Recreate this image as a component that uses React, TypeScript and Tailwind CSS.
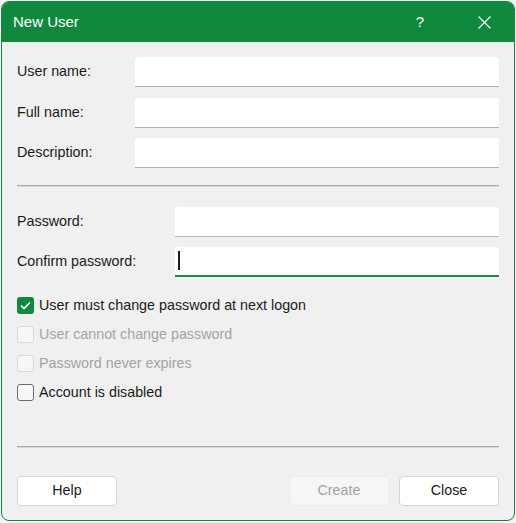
import type { ReactNode } from "react";

const FONT = { fontFamily: '"Liberation Sans", Arial, sans-serif' };

function Field({ label, labelWidth, focused, className }: { label: string; labelWidth: string; focused?: boolean; className?: string }) {
  return (
    <div className={`flex items-center ${className ?? ""}`}>
      <label className={`${labelWidth} shrink-0 text-[14.3px] text-[#1a1a1a]`}>{label}</label>
      <div
        className={`relative h-[30px] flex-1 rounded-t-[3px] bg-white ${
          focused ? "border-b-2 border-[#1f8a4c]" : "border-b border-[#b3b3b3]"
        }`}
      >
        {focused && <span className="absolute left-[3px] top-[4px] h-[19px] w-[1.5px] bg-[#1a1a1a]" />}
      </div>
    </div>
  );
}

function Check({ label, checked, disabled }: { label: string; checked?: boolean; disabled?: boolean }) {
  let box = "border border-[#6b6b6b] bg-[#f7f7f7]";
  if (checked) box = "bg-[#10893e]";
  if (disabled) box = "border border-[#d9d9d9] bg-[#f6f6f6]";
  return (
    <div className="flex h-[29px] items-center">
      <span className={`flex h-[17px] w-[17px] items-center justify-center rounded-[3px] ${box}`}>
        {checked && (
          <svg width="11" height="9" viewBox="0 0 11 9" fill="none">
            <path d="M1 4.5 L4 7.5 L10 1.5" stroke="white" strokeWidth="1.6" />
          </svg>
        )}
      </span>
      <span className={`ml-[5px] text-[14.3px] ${disabled ? "text-[#a3a3a3]" : "text-[#1a1a1a]"}`}>{label}</span>
    </div>
  );
}

function Btn({ children, disabled }: { children: ReactNode; disabled?: boolean }) {
  return (
    <button
      type="button"
      className={`h-[30px] w-[100px] rounded-[4px] text-[14.3px] ${
        disabled
          ? "border border-[#ececec] bg-[#f6f6f6] text-[#a3a3a3]"
          : "border border-[#d5d5d5] bg-white text-[#1a1a1a]"
      }`}
    >
      {children}
    </button>
  );
}

function Separator({ className }: { className: string }) {
  return <div className={`h-[2px] border-t border-[#a8a8a8] bg-[#d7d7d7] ${className}`} />;
}

export default function App() {
  return (
    <div className="h-[523px] w-[516px] bg-[#f4f4f4] p-[1px]" style={FONT}>
      <div className="flex h-[520px] w-[514px] flex-col overflow-hidden rounded-[8px] border border-[#10893e] bg-[#f0f0f0]">
        <div className="flex h-[40px] shrink-0 items-center bg-[#10893e] text-white">
          <span className="ml-[11px] text-[15px]">New User</span>
          <span className="ml-auto w-[30px] text-center text-[15px] font-light">?</span>
          <span className="ml-[34px] mr-[15px] flex w-[30px] justify-center">
            <svg width="13" height="13" viewBox="0 0 13 13" fill="none">
              <path d="M0.5 0.5 L12.5 12.5 M12.5 0.5 L0.5 12.5" stroke="white" strokeWidth="1.1" />
            </svg>
          </span>
        </div>

        <div className="flex flex-col px-[15px]">
          <Field label="User name:" labelWidth="w-[118px]" className="mt-[15px]" />
          <Field label="Full name:" labelWidth="w-[118px]" className="mt-[11px]" />
          <Field label="Description:" labelWidth="w-[118px]" className="mt-[10px]" />

          <Separator className="mt-[17px]" />

          <Field label="Password:" labelWidth="w-[158px]" className="mt-[20px]" />
          <Field label="Confirm password:" labelWidth="w-[158px]" focused className="mt-[10px]" />

          <div className="mt-[14px] flex flex-col">
            <Check label="User must change password at next logon" checked />
            <Check label="User cannot change password" disabled />
            <Check label="Password never expires" disabled />
            <Check label="Account is disabled" />
          </div>

          <Separator className="mt-[39px]" />

          <div className="mt-[28px] flex items-center">
            <Btn>Help</Btn>
            <div className="ml-auto flex gap-[10px]">
              <Btn disabled>Create</Btn>
              <Btn>Close</Btn>
            </div>
          </div>
        </div>
      </div>
    </div>
  );
}
